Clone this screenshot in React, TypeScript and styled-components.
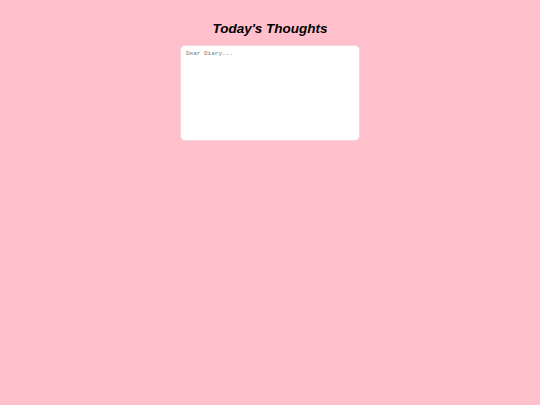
import React from "react";
import styled, { createGlobalStyle } from "styled-components";

const GlobalStyle = createGlobalStyle`
    html, body {
        margin: 0;
        padding: 0;
        background: #ffc0cb;
    }
`;

const Page = styled.div`
    min-height: 405px;
    display: flex;
    flex-direction: column;
    align-items: center;
    padding-top: 20px;
    box-sizing: border-box;
    font-family: "Liberation Sans", Arial, sans-serif;
`;

const Title = styled.h1`
    margin: 0 0 7px 0;
    font-size: 13.5px;
    line-height: 18px;
    font-weight: bold;
    font-style: italic;
    color: #000000;
`;

const DiaryInput = styled.textarea`
    width: 180px;
    height: 96px;
    box-sizing: border-box;
    padding: 4px 5px;
    border: 1px solid #f3d6db;
    border-radius: 5px;
    background: #ffffff;
    font-family: "Liberation Mono", "Courier New", monospace;
    font-size: 6px;
    line-height: 7px;
    resize: none;
    outline: none;
    color: #333333;

    &::placeholder {
        color: #7a7a7a;
    }
`;

function App() {
    return (
        <>
            <GlobalStyle />
            <Page>
                <Title>Today's Thoughts</Title>
                <DiaryInput placeholder="Dear Diary..." />
            </Page>
        </>
    );
}

export default App;
